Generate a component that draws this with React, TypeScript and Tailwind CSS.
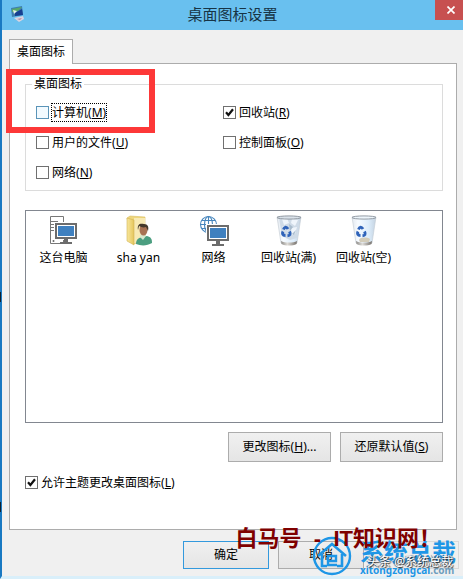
import React from 'react';

interface OptionProps {
  label: string;
  hotkey: string;
  checked?: boolean;
  focused?: boolean;
}

const Option: React.FC<OptionProps> = ({ label, hotkey, checked, focused }) => (
  <label className="flex items-center gap-[2px] w-max h-[18px] text-xs leading-[17px]">
    <span className="grid size-[13px] shrink-0">
      <input
        type="checkbox"
        defaultChecked={checked}
        className={`peer col-start-1 row-start-1 appearance-none size-[13px] border ${
          focused ? 'border-[#5a94b8] bg-[#f2faff]' : 'border-[#707070] bg-white'
        }`}
      />
      <svg
        viewBox="0 0 13 13"
        className="col-start-1 row-start-1 size-[13px] pointer-events-none opacity-0 peer-checked:opacity-100"
      >
        <path d="M3 6.2 L5.4 9 L10 3.3" fill="none" stroke="#111" strokeWidth="2.2" />
      </svg>
    </span>
    <span className={`border border-dotted ${focused ? 'border-black' : 'border-transparent'}`}>
      {label}(<u>{hotkey}</u>)
    </span>
  </label>
);

const Monitor = () => (
  <>
    <path d="M8 9h20v14H8z" fill="#fff" stroke="#fff" strokeWidth="4" />
    <path d="M8 9h20v14H8z" fill="#fff" stroke="#6c6c6c" strokeWidth="2" />
    <path d="M10 11h16v10H10z" fill="#3f80bf" />
    <path d="M16 24h4v3h4v2H12v-2h4z" fill="#6c6c6c" />
  </>
);

const ComputerIcon = () => (
  <svg viewBox="0 0 32 32" className="size-8">
    <path d="M2.5 1.5h13v27h-13z" fill="#fff" stroke="#777" />
    <path d="M3 6.500h7M3 9.500h4M3 12.500h4M3 15.500h3" stroke="#777" />
    <circle cx="5.500" cy="26" r="1" fill="#666" />
    <Monitor />
  </svg>
);

const UserFolderIcon = () => (
  <svg viewBox="0 0 32 32" className="size-8">
    <defs>
      <linearGradient id="folder" x1="0" x2="1">
        <stop offset="0" stopColor="#f8e69b" />
        <stop offset="1" stopColor="#e5c65c" />
      </linearGradient>
    </defs>
    <path d="M4 3l3-2 15 1v24l-12 3z" fill="#eed67c" stroke="#d8bd64" strokeWidth=".6" />
    <path d="M11 3h11v24l-11 1z" fill="#f8eab4" />
    <path d="M4 3l7 2v25l-7-4z" fill="url(#folder)" stroke="#d2b354" strokeWidth=".6" />
    <path d="M13 29c0-5 3-6 6-7l5-1c4 1 5 3 5 7-5 3-11 3-16 1z" fill="#4b9e80" />
    <path d="M17 22l3 3 3-4-2-3h-3z" fill="#d5e7cc" />
    <ellipse cx="20.500" cy="15" rx="4" ry="5.500" fill="#a87253" />
    <path d="M15 15c-1-6 2-7 6-6 4 0 5 3 4 7l-2-4c-3 1-5 0-7-1z" fill="#44382b" />
  </svg>
);

const NetworkIcon = () => (
  <svg viewBox="0 0 32 32" className="size-8">
    <g fill="none" stroke="#4685bd" strokeWidth="1.1">
      <circle cx="10.500" cy="9.500" r="8" />
      <ellipse cx="10.500" cy="9.500" rx="4" ry="8" />
      <path d="M10.500 1v17M3 9.500h15M4 5.500h13M4 13.500h13" />
    </g>
    <svg x="2" y="2" width="30" height="30" viewBox="0 0 30 30">
      <Monitor />
    </svg>
  </svg>
);

const BinIcon: React.FC<{ full?: boolean }> = ({ full }) => (
  <svg viewBox="0 0 32 32" className="size-8">
    <defs>
      <linearGradient id="glass" x1="0" x2="1">
        <stop offset="0" stopColor="#e3e8ee" />
        <stop offset=".25" stopColor="#f7fbff" />
        <stop offset=".7" stopColor="#dcecfa" />
        <stop offset="1" stopColor="#c4d2e0" />
      </linearGradient>
      <linearGradient id="base" x1="0" x2="1">
        <stop offset="0" stopColor="#8d8b88" />
        <stop offset=".4" stopColor="#dedcd8" />
        <stop offset="1" stopColor="#77716b" />
      </linearGradient>
    </defs>
    <path d="M4 2l4 26c4 2 13 2 16 0l4-26z" fill="url(#glass)" stroke="#c3cbd3" strokeWidth=".6" />
    {full && (
      <>
        <path d="M6 3l8-2 12 2-2 20-7 2-8-4z" fill="#cfdbe7" />
        <path d="M9 4l5-1 2 5-5 2zM19 4l6 1-3 6-4-3zM18 13l6-1-2 7-3 1zM9 11l4 0 2 5" fill="#eff5fb" />
        <path d="M16 9l4 3-3 4zM21 20l2-5-4 4z" fill="#a9bccd" />
      </>
    )}
    {!full && <path d="M11 25c1-3 8-3 11-1l-1 3H12z" fill="#d3ccb9" />}
    <path d="M8 26c4 2 12 2 16 0l-.5 3c-4 2-11 2-15 0z" fill="url(#base)" />
    <ellipse cx="16" cy="2.500" rx="12" ry="1.600" fill={full ? '#d9e1e9' : '#edf5fb'} stroke="#8a929b" strokeWidth=".9" />
    <g fill="none" stroke="#2f63b9" strokeWidth="2.900">
      <path d="M10.500 14.500c1-3 3-3 4.500-.5" />
      <path d="M16.500 16.500c1.500 3 .5 4-2 4.200" />
      <path d="M12.500 20.500c-3 0-3.500-2-2.500-4" />
    </g>
  </svg>
);

const desktopIcons = [
  { name: '这台电脑', icon: <ComputerIcon /> },
  { name: 'sha yan', icon: <UserFolderIcon /> },
  { name: '网络', icon: <NetworkIcon /> },
  { name: '回收站(满)', icon: <BinIcon full /> },
  { name: '回收站(空)', icon: <BinIcon /> },
];

const buttonClass =
  'border border-[#acacac] bg-linear-to-b from-[#f0f0f0] to-[#e5e5e5] text-xs text-black';

const Watermark = () => (
  <div className="absolute right-0 bottom-0 pointer-events-none">
    <div className="absolute right-[7px] bottom-0 flex items-end gap-2">
      <svg viewBox="0 0 40 40" className="size-10" fill="none" stroke="#1e96e6">
        <circle cx="20" cy="20" r="18" strokeWidth="2.400" />
        <path d="M6 20L20 8l14 12M10 18v12h5M30 18v12h-5" strokeWidth="2.600" />
        <path d="M25 29h-9v-9h8v5h-8" strokeWidth="2.400" />
      </svg>
      <div className="w-[96px] text-[#1e96e6] font-bold whitespace-nowrap">
        <div className="text-2xl leading-[24px]">系统总裁</div>
        <div className="text-[10px] leading-[12px]">
          xitongzongcai<span className="text-[#6d9dbd]">.com</span>
        </div>
      </div>
    </div>
    <div className="absolute right-[10px] bottom-[6px] text-xs leading-[16px] whitespace-nowrap text-white [text-shadow:1px_1px_1px_#222,-1px_0_1px_#555]">
      头条 @系统总裁
    </div>
    <div className="absolute right-[22px] bottom-[25px] flex items-center text-[22px] leading-[24px] font-bold whitespace-nowrap text-[#7f0000] font-['Liberation_Sans','Noto_Sans_CJK_SC',sans-serif]">
      <span>白马号</span>
      <span className="w-8 text-center">-</span>
      <span>IT知识网！</span>
    </div>
  </div>
);

const App: React.FC = () => (
  <div className="relative min-h-screen flex flex-col border-l-2 border-l-[#1979c2] border-b-3 border-b-[#d9effa] bg-[#f0f0f0] text-black font-['Noto_Sans','Noto_Sans_CJK_SC',sans-serif]">
    <header className="grid grid-cols-[1fr_auto_1fr] h-[30px] bg-[#69c0ef]">
      <svg viewBox="0 0 16 18" className="ml-2 mt-[5px] w-4 h-[18px]">
        <path d="M1 3l11-2 1 9-11 2z" fill="#3f7fae" />
        <path d="M2 4l10-2-4 4-6 1z" fill="#58a869" />
        <path d="M5 8l7-4 1 6-8 1z" fill="#173f91" />
        <path d="M3 5l4 1-3 3z" fill="#e6f3e4" />
        <path d="M4 13l9-2 1 3-5 3z" fill="#d9d3df" />
        <path d="M7 14l5-1-2 2z" fill="#ae899f" />
      </svg>
      <h1 className="text-[15px] leading-[29px] text-[#173445]">桌面图标设置</h1>
      <button
        aria-label="关闭"
        className="justify-self-end w-7 h-5 flex items-center justify-center bg-[#c75050]"
      >
        <svg viewBox="0 0 8 8" className="size-2 ml-1" stroke="#fff" strokeWidth="1.700">
          <path d="M.5.5l7 7M7.5.5l-7 7" />
        </svg>
      </button>
    </header>

    <main className="grow pt-[9px] pl-[7px] pr-[6px]">
      <div role="tablist" className="flex">
        <button
          role="tab"
          aria-selected="true"
          className="relative z-10 -mb-px w-16 h-[25px] border border-b-0 border-[#acacac] bg-white text-xs"
        >
          桌面图标
        </button>
      </div>

      <div role="tabpanel" className="border border-[#acacac] bg-white pt-[11px] pb-[38px] pl-[15px] pr-[13px]">
        <fieldset className="relative border border-[#dcdcdc] pl-[10px] pb-[3px]">
          <legend className="-ml-1 px-[2px] text-xs leading-[18px]">桌面图标</legend>
          <div className="grid grid-cols-[187px_1fr] auto-rows-[30px] items-center pt-1">
            <Option label="计算机" hotkey="M" focused />
            <Option label="回收站" hotkey="R" checked />
            <Option label="用户的文件" hotkey="U" />
            <Option label="控制面板" hotkey="O" />
            <Option label="网络" hotkey="N" />
          </div>
          <div className="absolute -left-5 -top-6 w-[149px] h-16 border-[6px] border-[#fd3838] pointer-events-none" />
        </fieldset>

        <ul className="mt-[19px] grid grid-cols-[repeat(auto-fill,75px)] content-start min-h-[213px] border border-[#828790] pt-1">
          {desktopIcons.map(({ name, icon }) => (
            <li key={name} className="flex flex-col items-center gap-[2px] text-xs leading-[18px] whitespace-nowrap">
              {icon}
              {name}
            </li>
          ))}
        </ul>

        <div className="mt-[9px] flex justify-end gap-[9px]">
          <button className={`${buttonClass} w-[103px] h-[30px]`}>
            更改图标(<u>H</u>)...
          </button>
          <button className={`${buttonClass} w-[103px] h-[30px]`}>
            还原默认值(<u>S</u>)
          </button>
        </div>
        <div className="mt-[11px]">
          <Option label="允许主题更改桌面图标" hotkey="L" checked />
        </div>
      </div>
    </main>

    <footer className="flex justify-end gap-[9px] pt-[10px] pb-[7px] pr-1">
      <button className="w-[86px] h-7 border border-[#3399dd] bg-linear-to-b from-[#f0f0f0] to-[#e5e5e5] text-xs">
        确定
      </button>
      <button className={`${buttonClass} w-[86px] h-7`}>取消</button>
      <button disabled aria-label="应用" className="w-[86px] h-7 border border-[#d9d9d9] bg-[#efefef]" />
    </footer>

    <div className="absolute -left-[2px] top-[292px] w-px h-[10px] bg-[#10202c]" />
    <div className="absolute -left-[2px] top-[502px] w-px h-[10px] bg-[#10202c]" />
    <Watermark />
  </div>
);

export default App;
